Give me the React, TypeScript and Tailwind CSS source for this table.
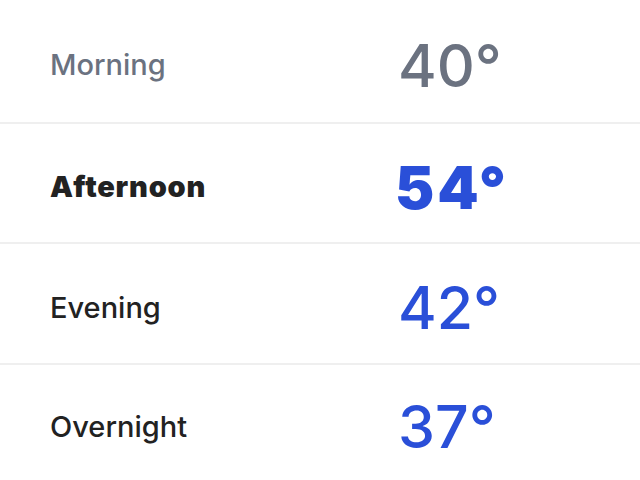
import React from "react";

const rows = [
  { label: "Morning", temp: "40°", h: "h-[124px]", labelCls: "text-[#6b7280] font-medium", tempCls: "text-[#6b7280] font-medium ml-0" },
  { label: "Afternoon", temp: "54°", h: "h-[120px]", labelCls: "text-[#222222] font-black tracking-[0.8px]", tempCls: "text-[#2a4fd8] font-black tracking-[3px] -ml-[3px]" },
  { label: "Evening", temp: "42°", h: "h-[121px]", labelCls: "text-[#222222] font-medium", tempCls: "text-[#2a4fd8] font-medium ml-0" },
  { label: "Overnight", temp: "37°", h: "h-[115px]", labelCls: "text-[#222222] font-medium", tempCls: "text-[#2a4fd8] font-medium ml-0" },
];

export default function App() {
  return (
    <div className="w-[640px] h-[480px] bg-white overflow-hidden" style={{ fontFamily: "Inter, 'Noto Sans', sans-serif" }}>
      {rows.map((r, i) => (
        <div
          key={r.label}
          className={`flex items-center pt-[8px] pl-[50px] ${r.h} ${i < rows.length - 1 ? "border-b-2 border-[#efefef]" : ""}`}
        >
          <div className={`w-[348px] text-[29px] ${r.labelCls}`}>{r.label}</div>
          <div className={`text-[59px] leading-none ${r.tempCls}`}>{r.temp}</div>
        </div>
      ))}
    </div>
  );
}
